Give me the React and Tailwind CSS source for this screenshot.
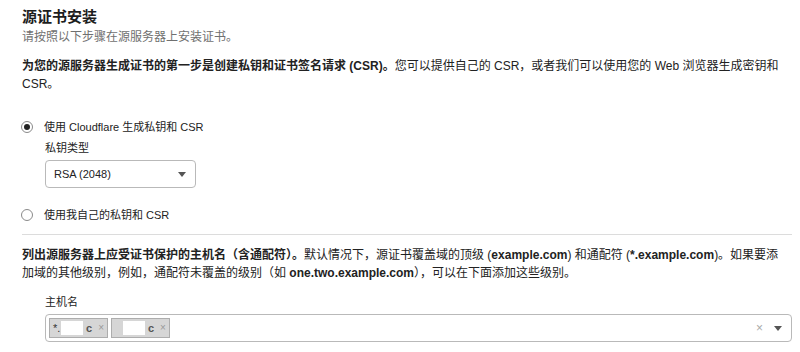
import React from 'react';

const Radio = ({ checked, label }) => (
  <label className="flex items-center h-[18px]">
    <span className="w-[12px] h-[12px] ml-[-1px] rounded-full border border-[#8a8a8a] flex items-center justify-center bg-white">
      {checked && <span className="w-[6px] h-[6px] rounded-full bg-[#222]"></span>}
    </span>
    <span className="ml-[11px] text-[11px] leading-[18px] text-[#222]">{label}</span>
  </label>
);

const Caret = () => (
  <svg width="8" height="5" viewBox="0 0 8 5" className="fill-[#555]">
    <path d="M0 0h8L4 5z" />
  </svg>
);

const Tag = ({ prefix }) => (
  <span className="flex items-center h-[20px] mr-[3px] px-[3px] bg-[#d6d6d6] border border-[#adadad] text-[11px] leading-[14px] text-[#333]">
    <span className="w-[8px]">{prefix}</span>
    <span className="w-[22px] h-[14px] bg-white"></span>
    <span className="ml-[3px] font-bold text-[#555]">c</span>
    <span className="ml-[6px] text-[#999] text-[10px]">×</span>
  </span>
);

export default function App() {
  return (
    <div
      className="w-[800px] h-[352px] overflow-hidden bg-white pl-[22px] pt-[7px] text-[#222]"
      style={{ fontFamily: '"Liberation Sans", "Noto Sans CJK SC", sans-serif' }}
    >
      <div className="w-[770px]">
        <h1 className="h-[20px] text-[15px] leading-[20px] font-bold text-[#1d1d1d]">源证书安装</h1>
        <p className="h-[18px] mt-[1px] text-[12px] leading-[18px] text-[#707070]">请按照以下步骤在源服务器上安装证书。</p>

        <p className="h-[36px] mt-[11px] text-[12px] leading-[18px] pr-[12px]">
          <b>为您的源服务器生成证书的第一步是创建私钥和证书签名请求 (CSR)。</b>您可以提供自己的 CSR，或者我们可以使用您的 Web 浏览器生成密钥和 CSR。
        </p>

        <div className="mt-[25px]">
          <Radio checked label="使用 Cloudflare 生成私钥和 CSR" />
        </div>
        <div className="pl-[23px]">
          <div className="h-[18px] mt-[3px] text-[11px] leading-[18px]">私钥类型</div>
          <div className="mt-[3px] w-[151px] h-[28px] rounded-[4px] border border-[#b9b9b9] flex items-center justify-between pl-[8px] pr-[9px] text-[11px] leading-[18px]">
            <span>RSA (2048)</span>
            <Caret />
          </div>
        </div>

        <div className="mt-[18px]">
          <Radio label="使用我自己的私钥和 CSR" />
        </div>

        <div className="mt-[10px] h-px bg-[#dcdcdc]"></div>

        <p className="h-[36px] mt-[11px] text-[12px] leading-[18px] pr-[10px]">
          <b>列出源服务器上应受证书保护的主机名（含通配符）。</b>默认情况下，源证书覆盖域的顶级 (<b>example.com</b>) 和通配符 (<b>*.example.com</b>)。如果要添加域的其他级别，例如，通配符未覆盖的级别（如 <b>one.two.example.com</b>），可以在下面添加这些级别。
        </p>

        <div className="pl-[23px]">
          <div className="h-[18px] mt-[11px] text-[11px] leading-[18px]">主机名</div>
          <div className="mt-[3px] h-[28px] rounded-[4px] border border-[#b9b9b9] flex items-center pl-[3px] pr-[9px]">
            <Tag prefix="*." />
            <Tag prefix="" />
            <span className="ml-auto text-[#aaa] text-[12px] leading-[18px]">×</span>
            <span className="ml-[11px]"><Caret /></span>
          </div>
        </div>
      </div>
    </div>
  );
}
